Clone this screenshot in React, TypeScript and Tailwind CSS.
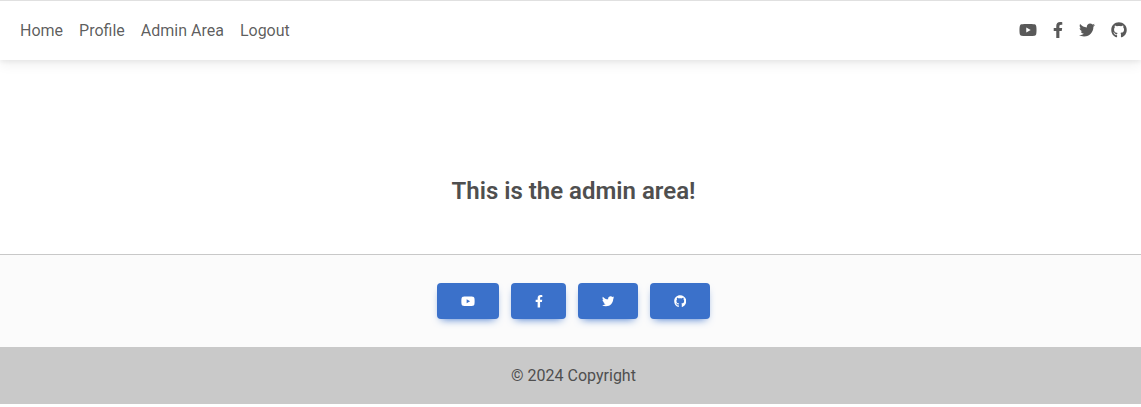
import { FaYoutube, FaFacebookF, FaTwitter, FaGithub } from "react-icons/fa";

const links = ["Home", "Profile", "Admin Area", "Logout"];
const socials = [
  { name: "YouTube", Icon: FaYoutube, nav: "w-[18px]", button: "w-[62px]", small: "w-[14px]" },
  { name: "Facebook", Icon: FaFacebookF, nav: "w-[10px]", button: "w-[55px]", small: "w-[8px]" },
  { name: "Twitter", Icon: FaTwitter, nav: "w-[16px]", button: "w-[60px]", small: "w-[12.5px]" },
  { name: "GitHub", Icon: FaGithub, nav: "w-[16px]", button: "w-[60px]", small: "w-[12.5px]" },
];

export default function App() {
  return (
    <div className="flex h-[407px] flex-col bg-white font-['Roboto',sans-serif] text-base leading-[25.6px] text-[#4f4f4f]">
      <nav className="relative flex h-[60px] shrink-0 items-center justify-between border-t border-[#e0e0e0] bg-white pr-[14px] pl-5 text-black/65 shadow-[0_4px_12px_0_rgba(0,0,0,0.07),0_2px_4px_rgba(0,0,0,0.05)]">
        <ul className="flex gap-4">
          {links.map((l) => (
            <li key={l}><a href="#">{l}</a></li>
          ))}
        </ul>
        <div className="flex items-center gap-4 pb-px">
          {socials.map(({ name, Icon, nav }) => (
            <a key={name} href="#" aria-label={name}><Icon className={`h-4 ${nav}`} /></a>
          ))}
        </div>
      </nav>
      <main className="flex h-[194px] shrink-0 justify-center pt-[117px] pl-[6px]">
        <h1 className="text-2xl leading-[29px] font-semibold">This is the admin area!</h1>
      </main>
      <footer className="border-t border-[#c8c8c8] bg-[#fbfbfb]">
        <div className="flex h-[92px] items-start justify-center gap-3 pt-7 pl-[6px]">
          {socials.map(({ name, Icon, button, small }) => (
            <a
              key={name}
              href="#"
              aria-label={name}
              className={`flex h-9 items-center justify-center rounded bg-[#3b71ca] pt-px text-white shadow-[0_4px_9px_-4px_#3b71ca] ${button}`}
            >
              <Icon className={`h-[12.5px] ${small}`} />
            </a>
          ))}
        </div>
        <div className="flex h-[57px] items-center justify-center bg-[#c9c9c9] pl-[6px]">© 2024 Copyright</div>
      </footer>
    </div>
  );
}
